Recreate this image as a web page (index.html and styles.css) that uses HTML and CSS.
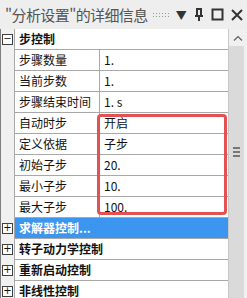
FILE: index.html
```html
<!DOCTYPE html>
<html lang="zh">
<head>
    <meta charset="UTF-8">
    <title>详细信息</title>
    <link rel="stylesheet" href="styles.css">
</head>
<body>
    <div class="panel">
        <div class="titlebar">
            <span class="title">"分析设置"的详细信息</span>
            <span class="grip"></span>
            <span class="tb-btn">&#9660;</span>
            <svg class="tb-icon" width="10" height="14" viewBox="0 0 10 14">
                <path d="M2 1h6M3 1v7M7 1v7M1 8h8M5 8v5" stroke="#333" stroke-width="2" fill="none"/>
            </svg>
            <svg class="tb-icon" width="13" height="13" viewBox="0 0 13 13">
                <rect x="1.5" y="1.5" width="10" height="10" stroke="#333" stroke-width="2" fill="none"/>
            </svg>
            <svg class="tb-icon" width="12" height="12" viewBox="0 0 12 12">
                <path d="M1 1l10 10M11 1L1 11" stroke="#333" stroke-width="2"/>
            </svg>
        </div>
        <div class="body">
            <div class="grid">
                <div class="row group">
                    <div class="gutter"><span class="toggle">&minus;</span></div>
                    <div class="cell">步控制</div>
                </div>
                <div class="row">
                    <div class="gutter"></div>
                    <div class="name">步骤数量</div>
                    <div class="value">1.</div>
                </div>
                <div class="row">
                    <div class="gutter"></div>
                    <div class="name">当前步数</div>
                    <div class="value">1.</div>
                </div>
                <div class="row">
                    <div class="gutter"></div>
                    <div class="name">步骤结束时间</div>
                    <div class="value">1. s</div>
                </div>
                <div class="marked">
                    <div class="row">
                        <div class="gutter"></div>
                        <div class="name">自动时步</div>
                        <div class="value">开启</div>
                    </div>
                    <div class="row">
                        <div class="gutter"></div>
                        <div class="name">定义依据</div>
                        <div class="value">子步</div>
                    </div>
                    <div class="row">
                        <div class="gutter"></div>
                        <div class="name">初始子步</div>
                        <div class="value">20.</div>
                    </div>
                    <div class="row">
                        <div class="gutter"></div>
                        <div class="name">最小子步</div>
                        <div class="value">10.</div>
                    </div>
                    <div class="row">
                        <div class="gutter"></div>
                        <div class="name">最大子步</div>
                        <div class="value">100.</div>
                    </div>
                </div>
                <div class="row group selected">
                    <div class="gutter"><span class="toggle">+</span></div>
                    <div class="cell">求解器控制...</div>
                </div>
                <div class="row group">
                    <div class="gutter"><span class="toggle">+</span></div>
                    <div class="cell">转子动力学控制</div>
                </div>
                <div class="row group">
                    <div class="gutter"><span class="toggle">+</span></div>
                    <div class="cell">重新启动控制</div>
                </div>
                <div class="row group">
                    <div class="gutter"><span class="toggle">+</span></div>
                    <div class="cell">非线性控制</div>
                </div>
            </div>
            <div class="scrollbar">
                <div class="arrow">
                    <svg width="10" height="6" viewBox="0 0 10 6">
                        <path d="M1 5.5L5 1.5L9 5.5" stroke="#606060" stroke-width="1.2" fill="none"/>
                    </svg>
                </div>
                <div class="thumb"><span class="thumb-grip"></span></div>
            </div>
        </div>
    </div>
</body>
</html>
```

FILE: styles.css
```css
body {
    margin: 0;
    font-family: "Noto Sans CJK SC", "Noto Sans", sans-serif;
    background: #ffffff;
}
.panel {
    width: 247px;
    height: 298px;
    display: flex;
    flex-direction: column;
    overflow: hidden;
}
.titlebar {
    height: 29px;
    flex: none;
    display: flex;
    align-items: center;
    background: #eeeeee;
    padding: 0 4px 0 5px;
    color: #555;
    box-sizing: border-box;
}
.title {
    font-size: 15px;
    letter-spacing: -0.6px;
    white-space: nowrap;
    flex: none;
}
.grip {
    width: 18px;
    height: 5px;
    flex: none;
    margin-left: 4px;
    background-image: radial-gradient(circle, #999 0.7px, transparent 0.8px);
    background-size: 3px 3px;
}
.tb-btn {
    font-size: 11px;
    color: #333;
    margin-left: 6px;
    flex: none;
}
.tb-icon {
    margin-left: 7px;
    flex: none;
}
.body {
    flex: 1;
    display: flex;
    min-height: 0;
    overflow: hidden;
}
.grid {
    flex: 1;
    background: #ffffff;
}
.row {
    display: flex;
    height: 21px;
    border-bottom: 1px solid #a8a8a8;
    box-sizing: border-box;
    font-size: 12px;
    color: #111;
    line-height: 20px;
}
.gutter {
    width: 15px;
    flex: none;
    background: #f0f0f0;
    border-left: 1px solid #808080;
    border-right: 1px solid #a8a8a8;
    box-sizing: border-box;
    display: flex;
    align-items: center;
    justify-content: center;
    height: 21px;
}
.toggle {
    width: 9px;
    height: 9px;
    border: 1px solid #404040;
    background: #ffffff;
    font-size: 10px;
    line-height: 8px;
    text-align: center;
    font-family: "DejaVu Sans", sans-serif;
    color: #111;
}
.cell {
    flex: 1;
    padding-left: 4px;
    font-weight: bold;
}
.name {
    width: 85px;
    flex: none;
    padding-left: 4px;
    border-right: 1px solid #a8a8a8;
    box-sizing: border-box;
}
.value {
    flex: 1;
    padding-left: 4px;
}
.selected .cell {
    background: #3c96f0;
    color: #ffffff;
}
.marked {
    position: relative;
}
.marked::after {
    content: "";
    position: absolute;
    left: 97px;
    right: 1px;
    top: 1px;
    bottom: 3px;
    border: 3px solid #e25252;
    border-radius: 4px;
}
.scrollbar {
    width: 18px;
    flex: none;
    display: flex;
    flex-direction: column;
    background: #f0f0f0;
    border-left: 1px solid #c8c8c8;
}
.arrow {
    height: 17px;
    flex: none;
    display: flex;
    align-items: center;
    justify-content: center;
}
.thumb {
    flex: 1;
    margin-right: 3px;
    background: #dadada;
    display: flex;
    align-items: center;
    justify-content: center;
}
.thumb-grip {
    width: 7px;
    height: 6px;
    border-top: 2px solid #777;
    border-bottom: 2px solid #777;
    position: relative;
    top: -20px;
}
.thumb-grip::after {
    content: "";
    display: block;
    height: 2px;
    margin-top: 2px;
    background: #777;
}
```
